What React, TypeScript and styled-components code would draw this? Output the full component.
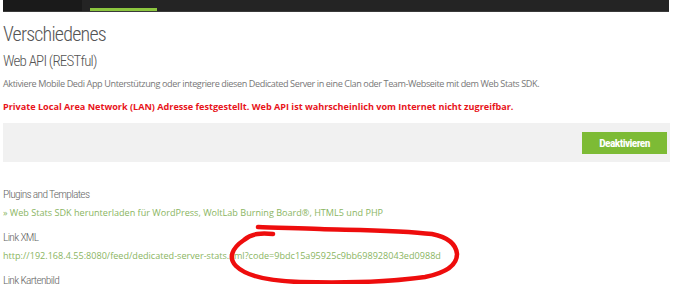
import React from "react";
import styled, { createGlobalStyle } from "styled-components";

const GlobalStyle = createGlobalStyle`
  html, body {
    margin: 0;
    padding: 0;
    background: #fff;
  }
  body {
    font-family: "Open Sans", "DejaVu Sans", sans-serif;
  }
`;

const condensed = `"Liberation Sans Narrow", "Roboto Condensed", "Roboto", sans-serif`;

const Page = styled.div`
  position: relative;
  width: 679px;
  height: 284px;
  overflow: hidden;
  padding: 0 10px 0 3px;
  box-sizing: border-box;
`;

const TopBar = styled.div`
  display: flex;
  height: 11px;
  width: 666px;
  background: #242424;
  border-bottom: 1px solid #3a3a3a;
`;

const TopBarLead = styled.div`
  width: 79px;
  background: #1a1a1a;
`;

const TopBarTab = styled.div<{ $active?: boolean }>`
  width: 67px;
  margin-left: 8px;
  align-self: flex-end;
  height: 3px;
  background: ${(p) => (p.$active ? "#8cc63f" : "transparent")};
`;

const Title = styled.h1`
  margin: 10px 0 0;
  font-family: ${condensed};
  font-weight: 300;
  font-size: 20px;
  line-height: 24px;
  letter-spacing: -0.8px;
  color: #555;
`;

const SubTitle = styled.h2`
  margin: 5px 0 0;
  font-family: ${condensed};
  font-weight: 300;
  font-size: 15px;
  line-height: 20px;
  letter-spacing: -0.8px;
  color: #555;
`;

const Text = styled.p<{ $alert?: boolean }>`
  margin: ${(p) => (p.$alert ? "10px 0 0" : "6px 0 0")};
  font-size: 9.1px;
  line-height: 13px;
  letter-spacing: ${(p) => (p.$alert ? "0" : "-0.4px")};
  font-weight: ${(p) => (p.$alert ? 700 : 400)};
  color: ${(p) => (p.$alert ? "#e8141b" : "#777")};
`;

const ActionPanel = styled.div`
  display: flex;
  justify-content: flex-end;
  align-items: center;
  margin-top: 10px;
  height: 39px;
  width: 667px;
  padding-right: 3px;
  box-sizing: border-box;
  background: #f1f1f1;
`;

const Button = styled.button`
  border: none;
  height: 22px;
  width: 85px;
  background: #7dbb35;
  color: #fff;
  font-family: ${condensed};
  font-weight: 700;
  font-size: 11.5px;
  letter-spacing: -0.6px;
  cursor: pointer;
`;

const Label = styled.div`
  margin-top: 24px;
  font-family: ${condensed};
  font-weight: 300;
  font-size: 11.5px;
  line-height: 16px;
  letter-spacing: -0.7px;
  color: #666;
`;

const LinkLine = styled.a`
  display: block;
  margin: 4px 0 9px;
  font-size: 9.1px;
  line-height: 14px;
  color: #8ab55f;
  text-decoration: none;

  & + ${Label} {
    margin-top: 0;
  }
`;

const Scribble = styled.svg`
  position: absolute;
  left: 0;
  top: 0;
  pointer-events: none;
`;

export default function App() {
  return (
    <>
      <GlobalStyle />
      <Page>
        <TopBar>
          <TopBarLead />
          <TopBarTab $active />
        </TopBar>
        <Title>Verschiedenes</Title>
        <SubTitle>Web API (RESTful)</SubTitle>
        <Text>
          Aktiviere Mobile Dedi App Unterstützung oder integriere diesen
          Dedicated Server in eine Clan oder Team-Webseite mit dem Web Stats
          SDK.
        </Text>
        <Text $alert>
          Private Local Area Network (LAN) Adresse festgestellt. Web API ist
          wahrscheinlich vom Internet nicht zugreifbar.
        </Text>
        <ActionPanel>
          <Button>Deaktivieren</Button>
        </ActionPanel>
        <Label>Plugins and Templates</Label>
        <LinkLine href="#">
          » Web Stats SDK herunterladen für WordPress, WoltLab Burning Board®,
          HTML5 und PHP
        </LinkLine>
        <Label>Link XML</Label>
        <LinkLine href="#">
          http://192.168.4.55:8080/feed/dedicated-server-stats.xml?code=9bdc15a95925c9bb698928043ed0988d
        </LinkLine>
        <Label>Link Kartenbild</Label>
        <Scribble width="679" height="284" viewBox="0 0 679 284">
          <path
            d="M273 234 C262 233 252 233 244 240 C232 248 228 258 236 266 C246 276 268 281 300 282 C340 283 390 282 425 277 C445 273 457 266 457 254 C456 244 447 237 432 234 C400 230 350 230 320 229 C295 228 272 228 258 227"
            fill="none"
            stroke="#ee0d0d"
            strokeWidth="4.5"
            strokeLinecap="round"
            strokeLinejoin="round"
          />
        </Scribble>
      </Page>
    </>
  );
}
